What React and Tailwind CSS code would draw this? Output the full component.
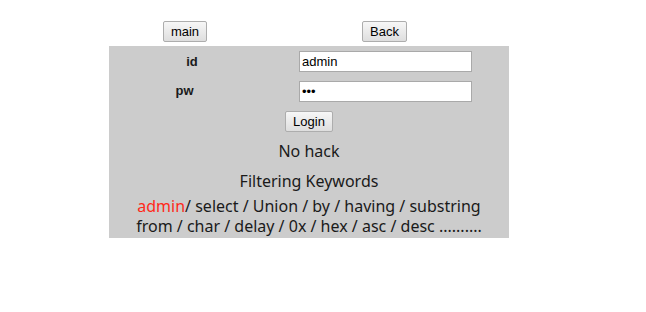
const Btn = ({ children, className = '' }) => (
  <button
    type="button"
    className={`h-[21px] px-[6px] border border-[#adadad] rounded-[2px] bg-gradient-to-b from-[#f7f7f7] to-[#dedede] text-[13px] leading-none text-black font-['Liberation_Sans',Arial,sans-serif] ${className}`}
  >
    {children}
  </button>
)

const Field = ({ value, type = 'text' }) => (
  <input
    type={type}
    defaultValue={value}
    className="w-[173px] h-[21px] px-[2px] bg-white border border-[#a9a9a9] text-[13px] text-black font-['Liberation_Sans',Arial,sans-serif] outline-none"
  />
)

export default function App() {
  return (
    <div className="w-[646px] h-[312px] bg-white">
      <div className="w-[400px] ml-[109px]">
        {/* top buttons */}
        <div className="flex h-[46px] pt-[21px]">
          <div className="w-[151px] flex justify-center">
            <Btn className="w-[44px] ml-[1px]">main</Btn>
          </div>
          <div className="w-[249px] flex justify-center">
            <Btn className="w-[45px]">Back</Btn>
          </div>
        </div>

        {/* login box */}
        <div className="bg-[#cccccc] pt-[1px] pb-[2px] text-[#1a1a1a]">
          <div className="flex items-center h-[29px]">
            <div className="w-[151px] text-center font-bold text-[13px] font-['Liberation_Sans',Arial,sans-serif] pl-[15px]">id</div>
            <div className="w-[249px] flex justify-center pl-[2px]">
              <Field value="admin" />
            </div>
          </div>
          <div className="flex items-center h-[30px]">
            <div className="w-[151px] text-center font-bold text-[13px] font-['Liberation_Sans',Arial,sans-serif]">pw</div>
            <div className="w-[249px] flex justify-center pl-[2px]">
              <Field value="abc" type="password" />
            </div>
          </div>
          <div className="flex justify-center h-[30px] items-center">
            <Btn className="w-[48px]">Login</Btn>
          </div>
          <div className="text-center font-['Noto_Sans','Noto_Sans_CJK_KR',sans-serif] text-[16px]">
            <div className="h-[30px] leading-[30px]">No hack</div>
            <div className="h-[30px] leading-[30px]">Filtering Keywords</div>
            <div className="leading-[20px]">
              <span className="text-[#ff2a1a]">admin</span>/ select / Union / by / having / substring
              <br />
              from / char / delay / 0x / hex / asc / desc ..........
            </div>
          </div>
        </div>
      </div>
    </div>
  )
}
